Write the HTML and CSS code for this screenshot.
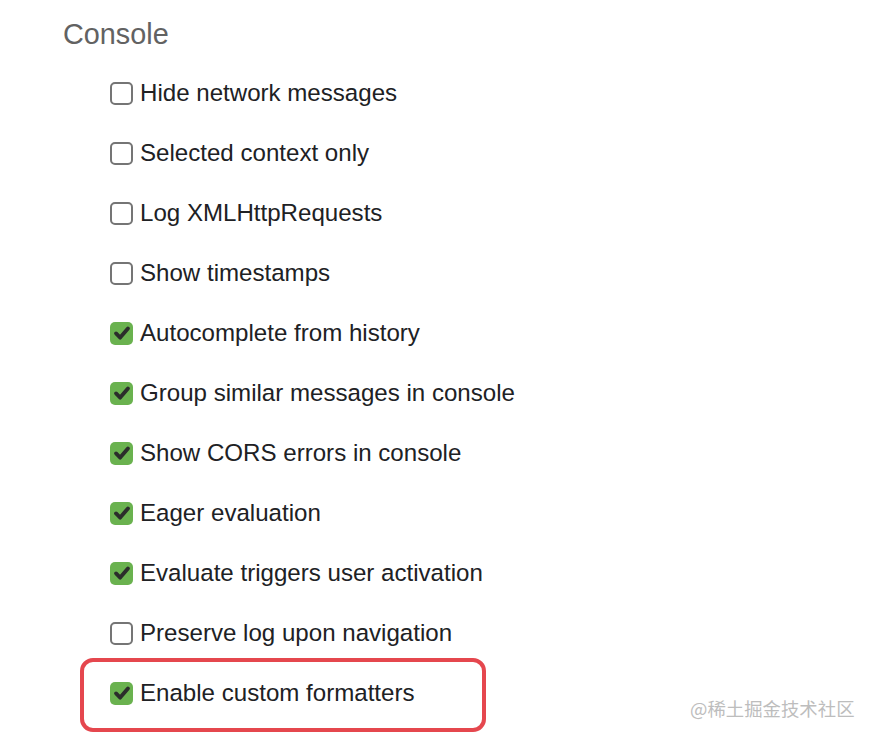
FILE: index.html
```html
<!DOCTYPE html>
<html>
<head>
<meta charset="utf-8">
<link rel="stylesheet" href="styles.css">
</head>
<body>
<div class="panel">
  <h2 class="title">Console</h2>
  <div class="list">
    <div class="row"><span class="box"></span><span class="label">Hide network messages</span></div>
    <div class="row"><span class="box"></span><span class="label">Selected context only</span></div>
    <div class="row"><span class="box"></span><span class="label">Log XMLHttpRequests</span></div>
    <div class="row"><span class="box"></span><span class="label">Show timestamps</span></div>
    <div class="row"><span class="box checked"><svg viewBox="0 0 24 24"><path d="M5.5 12.5 L10 17 L18.5 7" /></svg></span><span class="label">Autocomplete from history</span></div>
    <div class="row"><span class="box checked"><svg viewBox="0 0 24 24"><path d="M5.5 12.5 L10 17 L18.5 7" /></svg></span><span class="label">Group similar messages in console</span></div>
    <div class="row"><span class="box checked"><svg viewBox="0 0 24 24"><path d="M5.5 12.5 L10 17 L18.5 7" /></svg></span><span class="label">Show CORS errors in console</span></div>
    <div class="row"><span class="box checked"><svg viewBox="0 0 24 24"><path d="M5.5 12.5 L10 17 L18.5 7" /></svg></span><span class="label">Eager evaluation</span></div>
    <div class="row"><span class="box checked"><svg viewBox="0 0 24 24"><path d="M5.5 12.5 L10 17 L18.5 7" /></svg></span><span class="label">Evaluate triggers user activation</span></div>
    <div class="row"><span class="box"></span><span class="label">Preserve log upon navigation</span></div>
    <div class="row highlighted"><span class="box checked"><svg viewBox="0 0 24 24"><path d="M5.5 12.5 L10 17 L18.5 7" /></svg></span><span class="label">Enable custom formatters</span><span class="mark"></span></div>
  </div>
  <div class="watermark">@稀土掘金技术社区</div>
</div>
</body>
</html>
```
FILE: styles.css
```css
html, body {
  margin: 0;
  padding: 0;
  background: #ffffff;
}
body {
  width: 876px;
  height: 740px;
  overflow: hidden;
  font-family: "Liberation Sans", Arial, sans-serif;
}
.panel {
  position: relative;
  padding: 17px 0 0 63px;
  height: 723px;
}
.title {
  margin: 0 0 12px 0;
  font-size: 28.8px;
  line-height: 34px;
  font-weight: normal;
  color: #626262;
}
.list {
  display: flex;
  flex-direction: column;
  padding-left: 47px;
}
.row {
  position: relative;
  display: flex;
  align-items: center;
  gap: 7px;
  height: 60px;
  font-size: 24.1px;
  color: #202124;
}
.label {
  line-height: 28px;
}
.box {
  box-sizing: border-box;
  width: 23px;
  height: 23px;
  border: 2px solid #757575;
  border-radius: 5px;
  flex: none;
  display: flex;
  align-items: center;
  justify-content: center;
}
.box.checked {
  border: none;
  background: #6ab24f;
}
.box svg {
  width: 22px;
  height: 22px;
}
.box svg path {
  fill: none;
  stroke: #2b2d2b;
  stroke-width: 4.2;
  stroke-linecap: round;
  stroke-linejoin: round;
}
.mark {
  position: absolute;
  left: -30px;
  top: -5px;
  width: 406px;
  height: 74px;
  box-sizing: border-box;
  border: 4px solid #e5474e;
  border-radius: 13px;
}
.watermark {
  position: absolute;
  left: 690px;
  top: 694px;
  font-family: "Noto Sans CJK SC", sans-serif;
  font-size: 18.4px;
  line-height: 28px;
  color: #bdbdbd;
}
```
